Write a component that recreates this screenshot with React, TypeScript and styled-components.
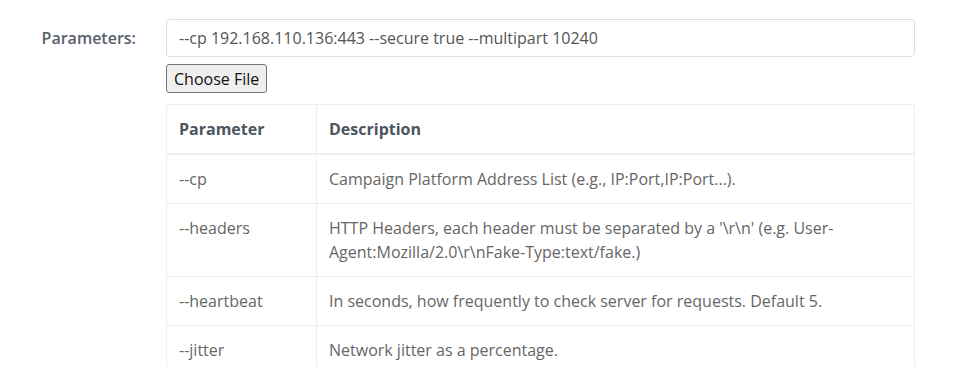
import React from "react";
import styled, { createGlobalStyle } from "styled-components";

const Global = createGlobalStyle`
  html, body { margin: 0; padding: 0; background: #fff; }
  body { font-family: "Open Sans", "Liberation Sans", sans-serif; font-size: 16px; color: #666; }
  * { box-sizing: border-box; }
`;

const FormRow = styled.div`
  display: grid;
  grid-template-columns: 166px 749px;
  padding-top: 19px;
`;

const Label = styled.label`
  text-align: right;
  padding-right: 30px;
  padding-top: 7px;
  font-weight: 600;
  font-size: 16px;
  line-height: 24px;
  color: #56606b;
`;

const Field = styled.div`
  display: flex;
  flex-direction: column;
  align-items: flex-start;
`;

const TextInput = styled.input`
  width: 100%;
  height: 38px;
  padding: 6px 12px;
  border: 1px solid #ddd;
  border-radius: 4px;
  font-family: inherit;
  font-size: 16px;
  color: #555;
  outline: none;
`;

const FileButton = styled.button`
  margin-top: 7px;
  height: 29px;
  padding: 0 7px;
  border: 1px solid #767676;
  border-radius: 3px;
  background: #efefef;
  font-family: inherit;
  font-size: 16px;
  color: #111;
`;

const Table = styled.table`
  margin-top: 11px;
  width: 100%;
  border-collapse: collapse;
  border: 1px solid #eee;
`;

const Th = styled.th<{ $first?: boolean }>`
  text-align: left;
  font-weight: 700;
  color: #4d5660;
  padding: 12px;
  line-height: 24px;
  border-left: 1px solid #eee;
  border-bottom: 2px solid #eee;
  width: ${(p) => (p.$first ? "150px" : "auto")};
`;

const Td = styled.td<{ $first?: boolean }>`
  padding: 12px;
  line-height: 24px;
  vertical-align: top;
  border-left: 1px solid #eee;
  border-top: 1px solid #eee;
  width: ${(p) => (p.$first ? "150px" : "auto")};
`;

const rows: [string, string][] = [
  ["--cp", "Campaign Platform Address List (e.g., IP:Port,IP:Port...)."],
  [
    "--headers",
    "HTTP Headers, each header must be separated by a '\\r\\n' (e.g. User-Agent:Mozilla/2.0\\r\\nFake-Type:text/fake.)",
  ],
  ["--heartbeat", "In seconds, how frequently to check server for requests. Default 5."],
  ["--jitter", "Network jitter as a percentage."],
];

export default function App() {
  return (
    <>
      <Global />
      <FormRow>
        <Label>Parameters:</Label>
        <Field>
          <TextInput defaultValue="--cp 192.168.110.136:443 --secure true --multipart 10240" />
          <FileButton>Choose File</FileButton>
          <Table>
            <thead>
              <tr>
                <Th $first>Parameter</Th>
                <Th>Description</Th>
              </tr>
            </thead>
            <tbody>
              {rows.map(([p, d]) => (
                <tr key={p}>
                  <Td $first>{p}</Td>
                  <Td>{d}</Td>
                </tr>
              ))}
            </tbody>
          </Table>
        </Field>
      </FormRow>
    </>
  );
}
